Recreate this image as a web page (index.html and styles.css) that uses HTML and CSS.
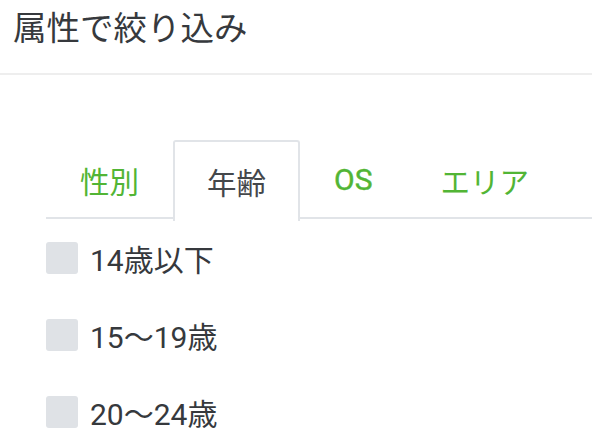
FILE: index.html
```html
<!DOCTYPE html>
<html lang="ja">
<head>
    <meta charset="UTF-8">
    <meta name="viewport" content="width=device-width, initial-scale=1.0">
    <title>属性で絞り込み</title>
    <link rel="stylesheet" href="styles.css">
</head>
<body>
    <div class="header">
        <h1>属性で絞り込み</h1>
    </div>

    <div class="filter">
        <div class="tabs">
            <a href="#gender" class="tab">性別</a>
            <a href="#age" class="tab active">年齢</a>
            <a href="#os" class="tab tab-latin">OS</a>
            <a href="#area" class="tab">エリア</a>
        </div>

        <div class="options">
            <label class="option"><span class="check"></span>14歳以下</label>
            <label class="option"><span class="check"></span>15〜19歳</label>
            <label class="option"><span class="check"></span>20〜24歳</label>
        </div>
    </div>
</body>
</html>
```

FILE: styles.css
```css
* {
    margin: 0;
    padding: 0;
    box-sizing: border-box;
}

body {
    font-family: Roboto, "Noto Sans CJK JP", sans-serif;
    background-color: #ffffff;
    color: #36393d;
    overflow: hidden;
}

.header {
    height: 75px;
    padding: 9px 13px 0;
    border-bottom: 2px solid #eeeeee;
}

.header h1 {
    font-size: 33.5px;
    font-weight: normal;
    line-height: 34px;
    font-family: "Noto Sans CJK JP", sans-serif;
}

.filter {
    margin-top: 65px;
    margin-left: 46px;
}

.tabs {
    display: flex;
    border-bottom: 2px solid #e1e4e8;
    height: 79px;
}

.tab {
    display: flex;
    align-items: center;
    padding: 0 32px 2px;
    height: 79px;
    font-size: 29.5px;
    color: #52b535;
    text-decoration: none;
    border: 2px solid transparent;
    border-bottom: none;
    border-radius: 3px 3px 0 0;
}

.tab-latin {
    font-size: 30px;
    -webkit-text-stroke: 0.4px #52b535;
}

.tab.active {
    color: #44474b;
    border-color: #e1e4e8;
    background-color: #ffffff;
    height: 81px;
    margin-bottom: -2px;
}

.options {
    display: flex;
    flex-direction: column;
}

.option {
    display: flex;
    align-items: center;
    gap: 12px;
    height: 77px;
    font-size: 30px;
}

.check {
    width: 32px;
    height: 32px;
    background-color: #dfe2e6;
    border-radius: 3px;
}
```
